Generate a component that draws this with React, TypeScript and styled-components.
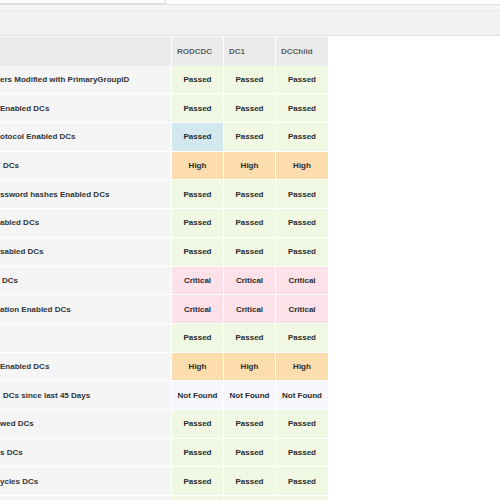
import React from 'react';
import styled, { createGlobalStyle } from 'styled-components';

type Status = 'passed' | 'info' | 'high' | 'critical' | 'notfound';

const GlobalStyle = createGlobalStyle`
  html, body {
    margin: 0;
    padding: 0;
    background: #ffffff;
    font-family: "Liberation Sans", Arial, sans-serif;
  }
`;

const Page = styled.div`
  width: 500px;
  height: 500px;
  overflow: hidden;
  background: #ffffff;
`;

const TopBar = styled.div`
  height: 4px;
  display: flex;
`;

const SearchBox = styled.div`
  width: 165px;
  height: 3px;
  border-right: 1px solid #dcdcdc;
  border-bottom: 1px solid #dcdcdc;
  background: #ffffff;
`;

const ToolBand = styled.div`
  height: 30px;
  background: #f0f1f3;
  border-top: 1px solid #e2e3e5;
  border-bottom: 1px solid #dfe3d9;
  box-shadow: inset 0 5px 0 #f3f4f5, inset 0 6px 0 #e6e7e9;
  margin-bottom: 1px;
`;

const Grid = styled.div`
  display: grid;
  grid-template-columns: 171px 51px 51px 52px;
  grid-auto-rows: 27.7px;
  gap: 1px;
  width: 328px;
  background: #ffffff;
`;

const HeadCell = styled.div<{ $label?: boolean }>`
  height: 29px;
  display: flex;
  align-items: center;
  padding-left: ${p => (p.$label ? '0' : '5px')};
  background: #ebebeb;
  color: #5a5f63;
  font-size: 8px;
  font-weight: bold;
`;

const LabelCell = styled.div`
  display: flex;
  align-items: center;
  background: #f5f5f5;
  color: #2f3336;
  font-size: 8px;
  font-weight: bold;
  white-space: nowrap;
  overflow: hidden;
`;

const palette: Record<Status, string> = {
  passed: '#f0f8e4',
  info: '#d1e8ef',
  high: '#fddcae',
  critical: '#fce1e8',
  notfound: '#f6f7fb',
};

const StatusCell = styled.div<{ $status: Status }>`
  display: flex;
  align-items: center;
  justify-content: center;
  background: ${p => palette[p.$status]};
  color: #2a2a2a;
  font-size: 8px;
  font-weight: bold;
  white-space: nowrap;
`;

const text: Record<Status, string> = {
  passed: 'Passed',
  info: 'Passed',
  high: 'High',
  critical: 'Critical',
  notfound: 'Not Found',
};

const rows: { label: string; indent?: number; cells: Status[] }[] = [
  { label: 'ers Modified with PrimaryGroupID', cells: ['passed', 'passed', 'passed'] },
  { label: 'Enabled DCs', cells: ['passed', 'passed', 'passed'] },
  { label: 'otocol Enabled DCs', cells: ['info', 'passed', 'passed'] },
  { label: 'DCs', indent: 3, cells: ['high', 'high', 'high'] },
  { label: 'ssword hashes Enabled DCs', cells: ['passed', 'passed', 'passed'] },
  { label: 'abled DCs', cells: ['passed', 'passed', 'passed'] },
  { label: 'sabled DCs', cells: ['passed', 'passed', 'passed'] },
  { label: 'DCs', indent: 2, cells: ['critical', 'critical', 'critical'] },
  { label: 'ation Enabled DCs', cells: ['critical', 'critical', 'critical'] },
  { label: '', cells: ['passed', 'passed', 'passed'] },
  { label: 'Enabled DCs', cells: ['high', 'high', 'high'] },
  { label: 'DCs since last 45 Days', indent: 3, cells: ['notfound', 'notfound', 'notfound'] },
  { label: 'wed DCs', cells: ['passed', 'passed', 'passed'] },
  { label: 's DCs', cells: ['passed', 'passed', 'passed'] },
  { label: 'ycles DCs', cells: ['passed', 'passed', 'passed'] },
  { label: '', cells: ['passed', 'passed', 'passed'] },
];

const App: React.FC = () => (
  <Page>
    <GlobalStyle />
    <TopBar>
      <SearchBox />
    </TopBar>
    <ToolBand />
    <Grid>
      <HeadCell $label />
      <HeadCell>RODCDC</HeadCell>
      <HeadCell>DC1</HeadCell>
      <HeadCell>DCChild</HeadCell>
      {rows.map((row, i) => (
        <React.Fragment key={i}>
          <LabelCell style={{ paddingLeft: row.indent ?? 0 }}>{row.label}</LabelCell>
          {row.cells.map((c, j) => (
            <StatusCell key={j} $status={c}>{text[c]}</StatusCell>
          ))}
        </React.Fragment>
      ))}
    </Grid>
  </Page>
);

export default App;
